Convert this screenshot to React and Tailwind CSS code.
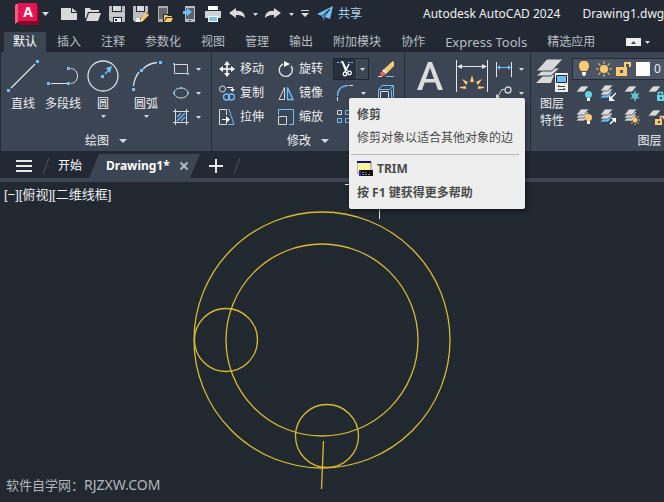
import { clsx } from 'clsx';

const Svg = ({ w = 16, h = 16, className, children }) => (
    <svg width={w} height={h} viewBox={`0 0 ${w} ${h}`} fill="none" className={clsx('shrink-0', className)} aria-hidden="true">
        {children}
    </svg>
);

const Caret = ({ w = 5, className = 'text-[#d5d8dc]' }) => (
    <svg width={w} height={Math.ceil(w / 2)} viewBox="0 0 8 4" preserveAspectRatio="none" className={clsx('shrink-0', className)} aria-hidden="true">
        <path d="M0 0H8L4 4Z" fill="currentColor" />
    </svg>
);

const IconButton = ({ label, children, className }) => (
    <button type="button" aria-label={label} className={clsx('flex shrink-0 items-center justify-center', className)}>
        {children}
    </button>
);

// ---- quick access toolbar icons ----

const LogoIcon = () => (
    <Svg w={24} h={24}>
        <path d="M2 19H21V3H24V23H4Z" fill="#86082c" />
        <path d="M0 3L4 1V19L0 22Z" fill="#f0607f" />
        <path d="M3 1H22V19H3Z" fill="#e61450" />
        <text x="13" y="15" textAnchor="middle" fill="#fff" className="font-['Open_Sans',sans-serif] text-[14px] leading-4 font-bold">A</text>
    </Svg>
);

const NewIcon = () => (
    <Svg>
        <path d="M0 2H10V7H16V14H0Z" fill="#d9d9d9" />
        <path d="M11 2L16 6H11Z" fill="#d9d9d9" />
    </Svg>
);

const OpenIcon = () => (
    <Svg>
        <path d="M0 2H5L6 4H14V6H3L1 12H0Z" fill="#d9d9d9" />
        <path d="M4 7H16L13 15H1Z" fill="#d9d9d9" />
    </Svg>
);

const SaveIcon = () => (
    <Svg>
        <path d="M0 0H3V6H13V0H16V16H13V11H4V16H2L0 14Z" fill="#b9bcc0" />
        <path d="M4 0H12V5H4Z" fill="#d9d9d9" />
        <path d="M0 7H16V10H0Z" fill="#c9cbce" />
        <path d="M5 12H12V16H5Z" fill="#f4f4f4" />
        <path d="M6 13H8V15H6Z" fill="#222933" />
    </Svg>
);

const SaveAsIcon = () => (
    <Svg>
        <path d="M0 0H3V6H12V0H15V6L8 12H4V16H2L0 14Z" fill="#b9bcc0" />
        <path d="M4 0H11V5H4Z" fill="#d9d9d9" />
        <path d="M3 12H7V16H3Z" fill="#f4f4f4" />
        <path d="M7 15L8 12L13 7L16 9L10 15Z" fill="#ffc864" />
        <path d="M13 7L15 6L16 9Z" fill="#e0574f" />
        <path d="M7 16L8 13L10 15Z" fill="#f3f3f3" />
    </Svg>
);

const OpenMobileIcon = () => (
    <Svg>
        <path d="M1 0H11V8H6V16H1Z" fill="#a9acb0" />
        <path d="M2 2H10V8H6V13H2Z" fill="#65696f" />
        <path d="M7 9H10L11 10H15V11H9L7 15Z" fill="#ffcb6e" />
        <path d="M10 12H16L14 16H7Z" fill="#ffcb6e" />
    </Svg>
);

const SaveMobileIcon = () => (
    <Svg>
        <path d="M4 0H14V16H4Z" fill="#b9bcc0" />
        <path d="M5 2H13V13H5Z" fill="#5c626a" />
        <path d="M8 14H10V15H8Z" fill="#333" />
        <path d="M2 5H6V2L11 6L6 10V8H2Z" fill="#6cc0ff" />
    </Svg>
);

const PrintIcon = () => (
    <Svg>
        <path d="M3 0H13V4H3Z" fill="#fff" />
        <path d="M0 5H16V12H13V10H3V12H0Z" fill="#d0d3d6" />
        <path d="M3 10H13V16H3Z" fill="#fff" />
        <path d="M4 11H12V15H4Z" fill="#7cc4f8" />
    </Svg>
);

const UndoIcon = ({ className }) => (
    <Svg className={className}>
        <path d="M0 7L7 2V5C12 4 16 7 16 12C13 9 10 9 7 9V12Z" fill="#d9d9d9" />
    </Svg>
);

const ShareIcon = () => (
    <Svg>
        <path d="M0 8L16 0L13 13L8 11L7 15L5 10Z" fill="#74c0fa" />
        <path d="M5 10L13 3L7 11V15" stroke="#222933" />
    </Svg>
);

// ---- ribbon icons ----

const Grip = ({ x, y, s = 3 }) => <rect x={x} y={y} width={s} height={s} fill="#6cc0ff" />;

const LineIcon = () => (
    <Svg w={32} h={32}>
        <path d="M4 28L28 4" stroke="#e4e4e4" strokeWidth="1.300" />
        <Grip x={0} y={29} />
        <Grip x={29} y={0} />
    </Svg>
);

const PolylineIcon = () => (
    <Svg w={32} h={32}>
        <path d="M4 23.500H20M24 23.500C28 23 30.500 20 30.500 16S28 9 24 8.500" stroke="#e4e4e4" />
        <Grip x={0} y={22} />
        <Grip x={20} y={22} />
        <Grip x={20} y={7} />
    </Svg>
);

const CircleIcon = () => (
    <Svg w={32} h={32}>
        <circle cx="16" cy="16" r="15" stroke="#dcdfe2" strokeWidth="1.300" />
        <path d="M18 14L22 10" stroke="#6cc0ff" strokeWidth="1.500" />
        <path d="M25 6L19 8L23 13Z" fill="#6cc0ff" />
        <Grip x={14} y={15} />
    </Svg>
);

const ArcIcon = () => (
    <Svg w={32} h={32}>
        <path d="M3.500 26C4 20 6 16 9 12M13 9C17 5 22 3 27 2.500" stroke="#dcdfe2" strokeWidth="1.300" />
        <Grip x={2} y={28} />
        <Grip x={10} y={9} />
        <Grip x={29} y={1} />
    </Svg>
);

const RectIcon = () => (
    <Svg>
        <path d="M1.500 3.500H14.500V12.500H1.500Z" stroke="#d9d9d9" />
        <Grip x={0} y={2} s={2} />
        <Grip x={14} y={12} s={2} />
    </Svg>
);

const EllipseIcon = () => (
    <Svg>
        <ellipse cx="8" cy="8" rx="7" ry="5" stroke="#d9d9d9" />
        <Grip x={7} y={2} s={2} />
        <Grip x={0} y={7} s={2} />
        <Grip x={14} y={7} s={2} />
    </Svg>
);

const HatchIcon = () => (
    <Svg>
        <path d="M2.500 0V16M13.500 0V16M0 2.500H16M0 13.500H16" stroke="#d9d9d9" />
        <path d="M4 8L8 4M4 12L12 4M8 12L12 8" stroke="#6cc0ff" strokeWidth="1.300" />
    </Svg>
);

const MoveIcon = () => (
    <Svg>
        <path d="M8 2V14M2 8H14" stroke="#fff" strokeWidth="1.500" />
        <path d="M8 0L11 4H5ZM8 16L11 12H5ZM0 8L4 5V11ZM16 8L12 5V11Z" fill="#fff" />
    </Svg>
);

const RotateIcon = () => (
    <Svg>
        <path d="M5 3A6.500 6.500 0 1 0 13 5" stroke="#dcdfe2" strokeWidth="1.400" />
        <path d="M6 0L12 3L6 6Z" fill="#fff" />
    </Svg>
);

const CopyIcon = () => (
    <Svg>
        <circle cx="3.500" cy="4" r="3" stroke="#d9d9d9" />
        <circle cx="7.500" cy="12" r="3" stroke="#6cc0ff" strokeWidth="1.300" />
        <circle cx="12.500" cy="12" r="3" stroke="#6cc0ff" strokeWidth="1.300" />
        <path d="M8 2.500H13.500V4" stroke="#fff" />
        <path d="M11 4H16L13.500 7Z" fill="#fff" />
    </Svg>
);

const MirrorIcon = () => (
    <Svg>
        <path d="M6.500 2.500V14.500H1Z" stroke="#d9d9d9" />
        <path d="M9.500 2.500V14.500H15Z" stroke="#6cc0ff" strokeWidth="1.400" />
    </Svg>
);

const StretchIcon = () => (
    <Svg>
        <path d="M7.500 6V0.500H0.500V15.500H7.500V13" stroke="#d9d9d9" />
        <path d="M9 0.500H10L15 15.500H9" stroke="#6cc0ff" />
        <path d="M3 10.500H9" stroke="#fff" />
        <path d="M7 7L11 10.500L7 14Z" fill="#fff" />
    </Svg>
);

const ScaleIcon = () => (
    <Svg>
        <path d="M0.500 6V0.500H15.500V15.500H11" stroke="#6cc0ff" />
        <path d="M0.500 7.500H8.500V15.500H0.500Z" stroke="#d9d9d9" />
    </Svg>
);

const TrimIcon = () => (
    <Svg>
        <path d="M0 1.500H4M11 1.500H16" stroke="#6cc0ff" strokeDasharray="2 1" />
        <path d="M4 0H6L11 10H8Z" fill="#fff" />
        <path d="M12 3L8 11" stroke="#fff" strokeWidth="1.500" />
        <circle cx="8" cy="13" r="1.800" stroke="#fff" strokeWidth="1.300" />
        <circle cx="12.500" cy="12" r="1.800" stroke="#fff" strokeWidth="1.300" />
    </Svg>
);

const EraseIcon = () => (
    <Svg>
        <path d="M15 0L16 1V5L9 12L6 8Z" fill="#ffcb6e" />
        <path d="M6 8L9 12L8 13L4 10Z" fill="#fff" />
        <path d="M4.500 10L8 13L6 15H3L2 12Z" fill="#ee6055" />
        <path d="M0 15.500H4" stroke="#d9d9d9" />
        <path d="M8 15.500H16" stroke="#6cc0ff" />
    </Svg>
);

const FilletIcon = () => (
    <Svg>
        <path d="M12 0.500H16M0.500 12V16" stroke="#d9d9d9" />
        <path d="M0.500 11C0.500 5 4 0.500 11 0.500" stroke="#6cc0ff" strokeWidth="1.300" />
    </Svg>
);

const ExplodeIcon = () => (
    <Svg>
        <path d="M2.500 6.500H10.500V15.500H2.500Z" stroke="#d9d9d9" />
        <path d="M0.500 15V4.500L4 0.500H15.500L12 4.500H0.500M15.500 1V12L13.500 15V5" stroke="#6cc0ff" />
    </Svg>
);

const ArrayIcon = () => (
    <Svg>
        <path d="M0.500 1.500H4.500V5.500H0.500Z" stroke="#d9d9d9" />
        <path d="M8.500 1.500H12.500V5.500H8.500ZM0.500 9.500H4.500V13.500H0.500ZM8.500 9.500H12.500V13.500H8.500Z" stroke="#6cc0ff" />
    </Svg>
);

const TextIcon = () => (
    <Svg w={26} h={28}>
        <path d="M0 28L11 0H15L26 28H21L18.300 20.500H7.700L5 28ZM9 17H17L13 5.500Z" fill="#dcdcdc" fillRule="evenodd" />
    </Svg>
);

const DimensionIcon = () => (
    <Svg w={32} h={32}>
        <path d="M0.500 0V32M31.500 0V32M3 6.500H29" stroke="#e4e4e4" />
        <path d="M1 6.500L6 4V9ZM31 6.500L26 4V9Z" fill="#e4e4e4" />
        <path d="M16 15L18 22H14ZM6 19L12 22L10 25ZM26 19L20 22L22 25ZM4 28V27L10 26V29ZM28 28V27L22 26V29Z" fill="#ffcb6e" />
    </Svg>
);

const LinearIcon = () => (
    <Svg h={15}>
        <path d="M0.500 0V15M15.500 0V15" stroke="#e4e4e4" />
        <path d="M2 5.500H14" stroke="#6cc0ff" />
        <path d="M1 5.500L4 3V8ZM15 5.500L12 3V8Z" fill="#6cc0ff" />
    </Svg>
);

const LeaderIcon = () => (
    <Svg>
        <circle cx="12" cy="5" r="3" stroke="#d9d9d9" strokeWidth="1.300" />
        <path d="M9 4.500H6L2 11" stroke="#d9d9d9" />
        <path d="M0 14V9L4 12Z" fill="#d9d9d9" />
    </Svg>
);

const LayerPropsIcon = () => (
    <Svg w={32} h={34}>
        <path d="M9 15L18 16L15 24H0L4 20Z" fill="#d9d9d9" />
        <path d="M9 9H24L15 17H0Z" fill="#d9d9d9" stroke="#3c4553" />
        <path d="M11 0H27L16 12H0Z" fill="#d9d9d9" stroke="#3c4553" />
        <path d="M19 14H32V33H19Z" fill="#f0f0f0" />
        <path d="M20.500 16.500H30.500V23.500H20.500Z" fill="#6cc0ff" stroke="#20252d" />
        <path d="M22 27.500H29M22 30.500H29M23 26L22 27.500M28 29L29 30.500" stroke="#444" />
    </Svg>
);

const Sheet = ({ y = 0, color = '#d9d9d9' }) => (
    <path d="M5 0H13L8 6H0Z" transform={`translate(0 ${y})`} fill={color} stroke="#3c4553" strokeWidth="0.700" />
);

const Bulb = ({ x, y, color }) => (
    <g transform={`translate(${x} ${y})`}>
        <circle cx="3.500" cy="3.500" r="3.500" fill={color} />
        <path d="M2 7H5V10H2Z" fill="#f4f4f4" />
    </g>
);

const Lock = ({ x, y, color, open }) => (
    <g transform={`translate(${x} ${y})`}>
        <path d={open ? 'M5.500 4V1.500H8.500V4' : 'M1.500 4V1.500H5.500V4'} stroke={color} strokeWidth="1.500" />
        <path d="M0 4H7V10H0Z" fill={color} />
        <path d="M3 6H5V8H3Z" fill="#3c4553" />
    </g>
);

const Sun = ({ x, y, r = 2.5, ray = 5 }) => (
    <g transform={`translate(${x} ${y})`}>
        <circle r={r} fill="#ffcb6e" />
        {[0, 45, 90, 135, 180, 225, 270, 315].map((a) => (
            <path key={a} d={`M${r + 1} 0H${ray}`} transform={`rotate(${a})`} stroke="#ffcb6e" />
        ))}
    </g>
);

const Flake = ({ x, y }) => (
    <g transform={`translate(${x} ${y})`} stroke="#62d4e3">
        <path d="M0 -5V5M-4 -2.500L4 2.500M-4 2.500L4 -2.500" strokeWidth="1.300" />
        <circle r="2.500" />
    </g>
);

const layerTools = [
    { label: '关闭图层', art: <><Sheet y={1} /><Bulb x={9} y={6} color="#62d4e3" /></> },
    { label: '隔离图层', art: <><Sheet y={7} color="#6cc0ff" /><Sheet y={4} /><Sheet /><path d="M16 8L11 13" stroke="#fff" strokeWidth="1.5" /><path d="M9 10V16H15Z" fill="#fff" /></> },
    { label: '冻结图层', art: <><Sheet y={1} /><Flake x={11} y={11} /></> },
    { label: '锁定图层', art: <><Sheet y={1} /><Lock x={9} y={6} color="#62d4e3" /></> },
    { label: '打开所有图层', art: <><Sheet y={6} /><Sheet y={3} /><Sheet /><Bulb x={9} y={5} color="#ffcb6e" /></> },
    { label: '取消隔离', art: <><Sheet y={7} color="#6cc0ff" /><Sheet y={4} /><Sheet /><path d="M10 15L15 10" stroke="#fff" strokeWidth="1.5" /><path d="M11 9H16V14Z" fill="#fff" /></> },
    { label: '解冻所有图层', art: <><Sheet y={6} /><Sheet y={3} /><Sheet /><Sun x={11} y={11} /></> },
    { label: '解锁图层', art: <><Sheet y={1} /><Lock x={7} y={6} color="#ffcb6e" open /></> },
];

const quickTools = [
    ['新建', <NewIcon />],
    ['打开', <OpenIcon />],
    ['保存', <SaveIcon />],
    ['另存为', <SaveAsIcon />],
    ['从移动设备打开', <OpenMobileIcon />],
    ['保存到移动设备', <SaveMobileIcon />],
    ['打印', <PrintIcon />],
    ['放弃', <UndoIcon />],
    ['放弃列表', <Caret w={5} />],
    ['重做', <UndoIcon className="-scale-x-100" />],
    ['重做列表', <Caret w={5} />],
];

const ribbonTabs = ['默认', '插入', '注释', '参数化', '视图', '管理', '输出', '附加模块', '协作', 'Express Tools', '精选应用'];

const modifyTools = [
    ['移动', <MoveIcon />],
    ['旋转', <RotateIcon />],
    ['复制', <CopyIcon />],
    ['镜像', <MirrorIcon />],
    ['拉伸', <StretchIcon />],
    ['缩放', <ScaleIcon />],
];

const TitleBar = () => (
    <header className="flex h-7 items-center gap-2 overflow-hidden pl-[15px] whitespace-nowrap">
        <button type="button" aria-label="应用程序菜单" className="mr-1 flex shrink-0 items-center gap-[3px]">
            <LogoIcon />
            <Caret w={7} />
        </button>
        {quickTools.map(([label, icon]) => (
            <IconButton key={label} label={label} className={label.endsWith('列表') ? 'w-1' : 'w-4'}>{icon}</IconButton>
        ))}
        <IconButton label="自定义快速访问工具栏" className="w-2">
            <Svg w={8} h={8}>
                <path d="M0 0.500H8" stroke="#d9d9d9" />
                <path d="M0 3H8L4 7Z" fill="#d9d9d9" />
            </Svg>
        </IconButton>
        <button type="button" className="flex shrink-0 items-center gap-[5px] text-[#a9d3f5]">
            <ShareIcon />
            共享
        </button>
        <h1 className="ml-[53px] flex gap-[22px] text-[#f0f1f2]">
            <span>Autodesk AutoCAD 2024</span>
            <span>Drawing1.dwg</span>
        </h1>
    </header>
);

const RibbonTabs = () => (
    <nav className="flex h-6 items-end gap-[2px] pl-1 whitespace-nowrap">
        {ribbonTabs.map((tab, i) => (
            <button
                key={tab}
                type="button"
                className={clsx(
                    'h-5 shrink-0 px-[9px]',
                    i === 0 ? 'bg-[#3c4553] text-white' : 'text-[#b9bdc3]',
                    tab === 'Express Tools' && 'text-[13px]'
                )}
            >
                {tab}
            </button>
        ))}
        <div className="ml-5 flex h-5 items-center gap-1">
            <IconButton label="最小化功能区" className="h-2 w-[15px] bg-[#eeeeee]">
                <Caret w={5} className="rotate-180 text-[#3c4553]" />
            </IconButton>
            <IconButton label="功能区选项"><Caret w={5} /></IconButton>
        </div>
    </nav>
);

const Panel = ({ title, className, children }) => (
    <section className={clsx('flex shrink-0 flex-col justify-between border-r border-[#242b35]', className)}>
        {children}
        {title && (
            <button type="button" className="flex h-5 items-center justify-center gap-[10px]">
                {title}
                <Caret w={8} />
            </button>
        )}
    </section>
);

const BigTool = ({ label, icon, menu, className = 'w-10' }) => (
    <button type="button" className={clsx('flex shrink-0 flex-col items-center self-start', className)}>
        {icon}
        <span className="mt-1 leading-4">{label}</span>
        {menu && <Caret className="mt-[3px] text-[#d5d8dc]" />}
    </button>
);

const SmallMenuTool = ({ label, icon }) => (
    <button type="button" aria-label={label} className="flex h-6 items-center gap-[7px]">
        {icon}
        <Caret />
    </button>
);

const DrawPanel = () => (
    <Panel title="绘图" className="w-[211px]">
        <div className="flex pl-[2px]">
            <div className="flex pt-2">
                <BigTool label="直线" icon={<LineIcon />} />
                <BigTool label="多段线" icon={<PolylineIcon />} />
                <BigTool label="圆" icon={<CircleIcon />} menu />
                <BigTool label="圆弧" icon={<ArcIcon />} menu className="w-[46px]" />
            </div>
            <div className="ml-1 flex flex-col pt-[5px]">
                <SmallMenuTool label="矩形" icon={<RectIcon />} />
                <SmallMenuTool label="椭圆" icon={<EllipseIcon />} />
                <SmallMenuTool label="图案填充" icon={<HatchIcon />} />
            </div>
        </div>
    </Panel>
);

const ModifyPanel = () => (
    <Panel title="修改" className="w-[193px]">
        <div className="flex pt-[5px] pl-[7px]">
            <div className="grid auto-rows-[24px] grid-cols-[59px_55px]">
                {modifyTools.map(([label, icon]) => (
                    <button key={label} type="button" className="flex items-center gap-[5px]">
                        {icon}
                        {label}
                    </button>
                ))}
            </div>
            <div className="grid auto-rows-[24px] grid-cols-[36px_16px] items-center gap-x-[9px]">
                <div className="flex h-[22px] border border-[#20252e] bg-[#27303c]">
                    <IconButton label="修剪" className="w-[23px] border-r border-[#4a5362]"><TrimIcon /></IconButton>
                    <IconButton label="修剪选项" className="flex-1 bg-[#3c4553]"><Caret /></IconButton>
                </div>
                <IconButton label="删除"><EraseIcon /></IconButton>
                <div className="flex items-center gap-2 pl-1">
                    <IconButton label="圆角"><FilletIcon /></IconButton>
                    <IconButton label="圆角选项"><Caret /></IconButton>
                </div>
                <IconButton label="分解"><ExplodeIcon /></IconButton>
                <IconButton label="阵列" className="w-6"><ArrayIcon /></IconButton>
            </div>
        </div>
    </Panel>
);

const AnnotationPanel = () => (
    <Panel className="w-[126px]">
        <div className="flex pl-3">
            <IconButton label="文字" className="mt-[10px] self-start"><TextIcon /></IconButton>
            <IconButton label="标注" className="mt-2 ml-[13px] self-start"><DimensionIcon /></IconButton>
            <div className="ml-2 flex flex-col pt-[5px]">
                <SmallMenuTool label="线性" icon={<LinearIcon />} />
                <SmallMenuTool label="引线" icon={<LeaderIcon />} />
            </div>
        </div>
    </Panel>
);

const LayerPanel = () => (
    <Panel title="图层" className="w-[256px]">
        <div className="flex pl-px">
            <button type="button" className="flex w-10 flex-col items-center self-start pt-[7px]">
                <LayerPropsIcon />
                <span className="mt-[2px] w-6 leading-[17px]">图层特性</span>
            </button>
            <div className="flex flex-1 flex-col pt-[6px]">
                <button type="button" aria-label="图层 0" className="flex h-[22px] items-center gap-1 border border-[#262c36] bg-[#4b5566] pl-[3px]">
                    <Svg>
                        <path d="M8 0C4.500 0 3 2 3 5C3 8 5 9 5 10H11C11 9 13 8 13 5C13 2 11.500 0 8 0Z" fill="#ffcb6e" />
                        <path d="M6 11H10V13L9 15H7L6 13Z" fill="#f4f4f4" />
                    </Svg>
                    <Svg><Sun x={8} y={8} r={4} ray={8} /></Svg>
                    <Svg>
                        <path d="M9 7V2H14V6" stroke="#ffcb6e" strokeWidth="2" />
                        <path d="M0 6H11V15H0Z" fill="#ffcb6e" />
                        <path d="M4 9H7V12H4Z" fill="#4b5566" />
                    </Svg>
                    <span className="size-[14px] bg-white" />
                    0
                </button>
                <div className="grid auto-rows-[24px] grid-cols-[repeat(4,24px)] items-center pt-[1px] pl-1">
                    {layerTools.map(({ label, art }) => (
                        <IconButton key={label} label={label} className="w-4"><Svg>{art}</Svg></IconButton>
                    ))}
                </div>
            </div>
        </div>
    </Panel>
);

const FileTabs = () => (
    <nav className="flex h-6 items-center text-white">
        <IconButton label="菜单" className="ml-4">
            <Svg h={12}>
                <path d="M0 1H16M0 6H16M0 11H16" stroke="#e6e6e6" strokeWidth="2" />
            </Svg>
        </IconButton>
        <Svg w={8} className="ml-[10px]"><path d="M1 16L7 0" stroke="#4d5663" /></Svg>
        <button type="button" className="ml-2">开始</button>
        <div className="ml-[7px] flex h-6 w-[111px] items-center justify-between bg-[#3c4553] pr-3 pl-[17px] [clip-path:polygon(10px_0,100%_0,calc(100%-10px)_100%,0_100%)]">
            <button type="button" className="font-bold">Drawing1*</button>
            <IconButton label="关闭">
                <Svg w={8} h={8}><path d="M0.500 0.500L7.500 7.500M7.500 0.500L0.500 7.500" stroke="#b4b9c0" strokeWidth="2" /></Svg>
            </IconButton>
        </div>
        <IconButton label="新图形" className="ml-[9px]">
            <Svg w={14} h={14}><path d="M7 0V14M0 7H14" stroke="#e6e6e6" strokeWidth="2" /></Svg>
        </IconButton>
        <Svg w={8} className="ml-[10px]"><path d="M1 16L7 0" stroke="#4d5663" /></Svg>
    </nav>
);

const Drawing = () => (
    <svg width="664" height="320" viewBox="0 0 664 320" fill="none" className="absolute top-0 left-0" aria-hidden="true">
        <g stroke="#d9bb30" strokeWidth="1.300">
            <circle cx="322" cy="158" r="128" />
            <circle cx="322" cy="158" r="96" />
            <circle cx="226" cy="158" r="31.500" />
            <circle cx="327" cy="254" r="31.500" />
            <path d="M323.500 259L321.500 307" />
        </g>
        <path d="M379.500 0V37M345 2.500H380" stroke="#e6e6e6" />
    </svg>
);

const TrimTooltip = () => (
    <div role="tooltip" className="absolute top-[98px] left-[349px] w-[176px] rounded-xs bg-[#eeeeee] pt-[9px] pb-2 leading-4 text-[#4a4a4a] shadow-[1px_2px_4px_rgba(0,0,0,0.5)]">
        <p className="px-2 font-bold">修剪</p>
        <p className="mt-[7px] px-2 whitespace-nowrap">修剪对象以适合其他对象的边</p>
        <hr className="mt-2 mr-[6px] ml-[2px] border-[#b8b8b8]" />
        <p className="mt-[6px] flex items-center gap-1 px-2 font-bold">
            <Svg>
                <path d="M0 1H14V12H0Z" fill="#f8f59a" stroke="#888" />
                <path d="M0 0H14V2H0Z" fill="#10108c" />
                <path d="M2 9H16V15H2Z" fill="#111" />
                <path d="M2 9H4V15H2Z" fill="#2a2ab4" />
                <path d="M5 11.500H9M5 13.500H14" stroke="#888" strokeDasharray="2 1" />
            </Svg>
            TRIM
        </p>
        <p className="mt-2 px-2 font-bold">按 F1 键获得更多帮助</p>
    </div>
);

export default function App() {
    return (
        <div className="relative flex min-h-screen flex-col overflow-hidden bg-[#222933] font-['Noto_Sans','Noto_Sans_CJK_SC',sans-serif] text-[12px] leading-4 text-[#eceef0]">
            <TitleBar />
            <RibbonTabs />
            <div className="mb-[3px] ml-px flex h-[99px] overflow-hidden bg-[#3c4553]">
                <DrawPanel />
                <ModifyPanel />
                <AnnotationPanel />
                <LayerPanel />
            </div>
            <FileTabs />
            <main className="relative flex flex-1 flex-col justify-between border-t-4 border-[#3c4553] bg-[#212830]">
                <Drawing />
                <p className="px-1 pt-[5px] font-['Liberation_Sans','Noto_Sans_CJK_SC',sans-serif] text-[13px]">[−][俯视][二维线框]</p>
                <p className="px-[6px] pb-[9px] text-[13px] text-[#b4b7ba]">
                    软件自学网：<span className="text-[14px]">RJZXW.COM</span>
                </p>
            </main>
            <TrimTooltip />
        </div>
    );
}
